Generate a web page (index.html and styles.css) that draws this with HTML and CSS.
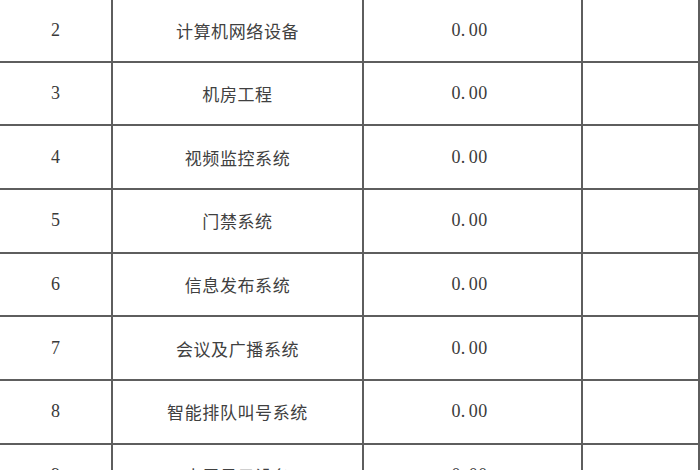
FILE: index.html
```html
<!DOCTYPE html>
<html lang="zh">
<head>
<meta charset="utf-8">
<title>设备清单</title>
<link rel="stylesheet" href="styles.css">
</head>
<body>
<div class="sheet">
  <div class="cell num">2</div><div class="cell name">计算机网络设备</div><div class="cell amt">0<span class="dot">.</span>00</div><div class="cell note"></div>
  <div class="cell num">3</div><div class="cell name">机房工程</div><div class="cell amt">0<span class="dot">.</span>00</div><div class="cell note"></div>
  <div class="cell num">4</div><div class="cell name">视频监控系统</div><div class="cell amt">0<span class="dot">.</span>00</div><div class="cell note"></div>
  <div class="cell num">5</div><div class="cell name">门禁系统</div><div class="cell amt">0<span class="dot">.</span>00</div><div class="cell note"></div>
  <div class="cell num">6</div><div class="cell name">信息发布系统</div><div class="cell amt">0<span class="dot">.</span>00</div><div class="cell note"></div>
  <div class="cell num">7</div><div class="cell name">会议及广播系统</div><div class="cell amt">0<span class="dot">.</span>00</div><div class="cell note"></div>
  <div class="cell num">8</div><div class="cell name">智能排队叫号系统</div><div class="cell amt">0<span class="dot">.</span>00</div><div class="cell note"></div>
  <div class="cell num">9</div><div class="cell name">大屏显示设备</div><div class="cell amt">0<span class="dot">.</span>00</div><div class="cell note"></div>
</div>
</body>
</html>
```

FILE: styles.css
```css
html, body {
  margin: 0;
  padding: 0;
  background: #ffffff;
  overflow: hidden;
}

.sheet {
  display: grid;
  grid-template-columns: 111px 249px 217px 115px;
  grid-template-rows: 60.5px repeat(7, 61.7px);
  gap: 2px;
  padding-right: 2px;
  width: max-content;
  background: #5e5e5e;
}

.cell {
  background: #ffffff;
  display: flex;
  align-items: center;
  justify-content: center;
  color: #3a3a3a;
}

.num, .amt {
  font-family: "Liberation Serif", "Times New Roman", serif;
  font-size: 18px;
}

.amt {
  letter-spacing: 0.4px;
  padding-right: 6px;
}

.dot {
  margin-right: 3px;
}

.name {
  font-family: "Noto Sans CJK SC", "Noto Sans", sans-serif;
  font-size: 17px;
  letter-spacing: 0.6px;
  color: #404040;
}
```
